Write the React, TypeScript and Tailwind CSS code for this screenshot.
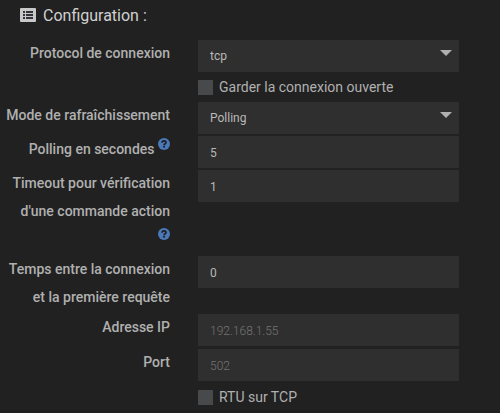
import { useId, useState } from "react";
import type { ReactNode } from "react";

const labelText = "pb-[2px] text-right text-[14px] leading-7 font-medium text-[#b0b0b0]";
const fieldBase =
  "block h-8 w-full appearance-none rounded-none border-0 bg-[#2f2f2f] px-3 text-[12px] text-[#b8b8b8] outline-none";
const inputField = `${fieldBase} pt-[2px] placeholder:text-[#747474] placeholder:font-light placeholder:opacity-100`;

function HelpIcon() {
  return (
    <svg viewBox="0 0 12 12" className="inline-block size-3 align-[4px]" role="img" aria-label="Aide">
      <circle cx="6" cy="6" r="6" fill="#4a78b8" />
      <path
        d="M4 4.7C4.1 3.4 4.9 2.8 6 2.8s2 .7 2 1.7c0 1.3-1.9 1.3-1.9 2.7"
        fill="none"
        stroke="#212121"
        strokeWidth="1.7"
      />
      <rect x="5.1" y="7.9" width="1.9" height="1.7" fill="#212121" />
    </svg>
  );
}

function Row({ label, help, helpBelow, roomy, children }: {
  label: string;
  help?: boolean;
  helpBelow?: boolean;
  roomy?: boolean;
  children: (id: string) => ReactNode;
}) {
  const id = useId();
  return (
    <div className="grid grid-cols-[166px_1fr] gap-x-7">
      <label htmlFor={id} className={labelText}>
        {label}
        {help && " "}
        {helpBelow && <br />}
        {help && <HelpIcon />}
      </label>
      <div className={roomy ? "pt-px pb-[2px]" : "py-px"}>{children(id)}</div>
    </div>
  );
}

function SelectField({ id, options }: { id: string; options: string[] }) {
  return (
    <div className="relative">
      <select id={id} className={fieldBase}>
        {options.map((option) => (
          <option key={option}>{option}</option>
        ))}
      </select>
      <svg viewBox="0 0 12 6" className="pointer-events-none absolute top-[10px] right-[7px] h-[6px] w-3" aria-hidden="true">
        <path d="M0 0h12L6 6z" fill="#b0b0b0" />
      </svg>
    </div>
  );
}

function CheckRow({ label }: { label: string }) {
  const [checked, setChecked] = useState(false);
  return (
    <div className="grid grid-cols-[166px_1fr] gap-x-7">
      <label className="col-start-2 flex h-7 items-center gap-[6px] text-[14px] leading-7 text-[#b0b0b0]">
        <input
          type="checkbox"
          checked={checked}
          onChange={(event) => setChecked(event.target.checked)}
          className="size-[15px] appearance-none bg-[#48494b] checked:bg-[#4a78b8]"
        />
        {label}
      </label>
    </div>
  );
}

export default function App() {
  return (
    <main className="min-h-screen bg-[#212121] pr-[41px] pl-1 font-['Roboto',sans-serif]">
      <form>
        <h1 className="flex h-[39px] items-start gap-[7px] pt-1 pl-4 text-[16px] leading-6 text-[#d0d0d0]">
          <svg viewBox="0 0 16 14" className="mt-1 h-[14px] w-4" aria-hidden="true">
            <rect width="16" height="14" rx="1" fill="#c8c8c8" />
            <path d="M3 3h2v2H3zM6 3h7v2H6zM3 6h2v2H3zM6 6h7v2H6zM3 9h2v2H3zM6 9h7v2H6z" fill="#33333a" />
          </svg>
          Configuration :
        </h1>
        <Row label="Protocol de connexion">{(id) => <SelectField id={id} options={["tcp", "rtu"]} />}</Row>
        <CheckRow label="Garder la connexion ouverte" />
        <Row label="Mode de rafraîchissement">{(id) => <SelectField id={id} options={["Polling", "Cyclique"]} />}</Row>
        <Row label="Polling en secondes" help>
          {(id) => <input id={id} type="text" defaultValue="5" className={inputField} />}
        </Row>
        <Row label="Timeout pour vérification d'une commande action" help helpBelow>
          {(id) => <input id={id} type="text" defaultValue="1" className={inputField} />}
        </Row>
        <Row label="Temps entre la connexion et la première requête">
          {(id) => <input id={id} type="text" defaultValue="0" className={inputField} />}
        </Row>
        <Row label="Adresse IP" roomy>
          {(id) => <input id={id} type="text" placeholder="192.168.1.55" className={inputField} />}
        </Row>
        <Row label="Port" roomy>
          {(id) => <input id={id} type="text" placeholder="502" className={inputField} />}
        </Row>
        <CheckRow label="RTU sur TCP" />
      </form>
    </main>
  );
}
